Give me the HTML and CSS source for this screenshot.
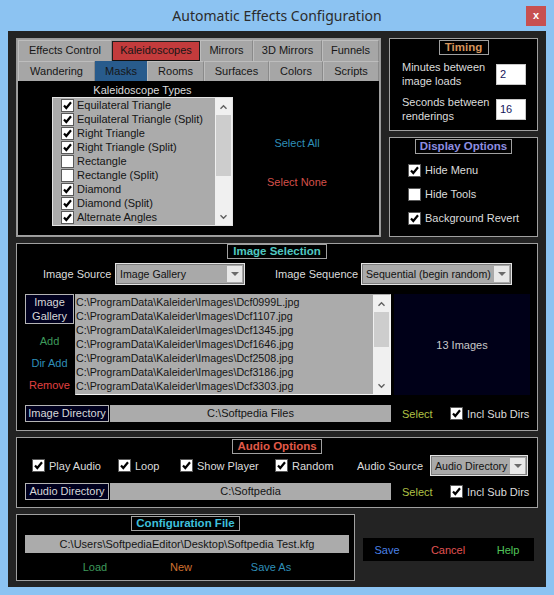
FILE: index.html
```html
<!DOCTYPE html>
<html>
<head>
<meta charset="utf-8">
<title>Automatic Effects Configuration</title>
<link rel="stylesheet" href="styles.css">
</head>
<body>
<div class="titlebar">
  <span class="title">Automatic Effects Configuration</span>
  <span class="close">x</span>
</div>
<div class="client">
  <div class="row-top">
    <div class="tabpanel">
      <div class="tabs">
        <span class="tab w94">Effects Control</span>
        <span class="tab w88 active-red">Kaleidoscopes</span>
        <span class="tab w53">Mirrors</span>
        <span class="tab w69">3D Mirrors</span>
        <span class="tab w57">Funnels</span>
      </div>
      <div class="tabs r2">
        <span class="tab w77">Wandering</span>
        <span class="tab w52 active-blue">Masks</span>
        <span class="tab w57">Rooms</span>
        <span class="tab w65">Surfaces</span>
        <span class="tab w54">Colors</span>
        <span class="tab w56">Scripts</span>
      </div>
      <div class="tabbody">
        <div class="kt">
          <div class="kt-label">Kaleidoscope Types</div>
          <div class="klist">
            <div class="kitems">
              <div class="kitem"><span class="cb"><svg viewBox="0 0 11 11"><path d="M2 5.5 4.3 8 9 2.3"/></svg></span><span>Equilateral Triangle</span></div>
              <div class="kitem"><span class="cb"><svg viewBox="0 0 11 11"><path d="M2 5.5 4.3 8 9 2.3"/></svg></span><span>Equilateral Triangle (Split)</span></div>
              <div class="kitem"><span class="cb"><svg viewBox="0 0 11 11"><path d="M2 5.5 4.3 8 9 2.3"/></svg></span><span>Right Triangle</span></div>
              <div class="kitem"><span class="cb"><svg viewBox="0 0 11 11"><path d="M2 5.5 4.3 8 9 2.3"/></svg></span><span>Right Triangle (Split)</span></div>
              <div class="kitem"><span class="cb"></span><span>Rectangle</span></div>
              <div class="kitem"><span class="cb"></span><span>Rectangle (Split)</span></div>
              <div class="kitem"><span class="cb"><svg viewBox="0 0 11 11"><path d="M2 5.5 4.3 8 9 2.3"/></svg></span><span>Diamond</span></div>
              <div class="kitem"><span class="cb"><svg viewBox="0 0 11 11"><path d="M2 5.5 4.3 8 9 2.3"/></svg></span><span>Diamond (Split)</span></div>
              <div class="kitem"><span class="cb"><svg viewBox="0 0 11 11"><path d="M2 5.5 4.3 8 9 2.3"/></svg></span><span>Alternate Angles</span></div>
            </div>
            <div class="vscroll">
              <span class="sbtn"><svg viewBox="0 0 7 4"><path d="M0.5 3.8 3.5 0.8 6.5 3.8"/></svg></span>
              <span class="thumb k-thumb"></span>
              <span class="track"></span>
              <span class="sbtn"><svg viewBox="0 0 7 4"><path d="M0.5 0.2 3.5 3.2 6.5 0.2"/></svg></span>
            </div>
          </div>
        </div>
        <div class="ksel">
          <span class="c-blue">Select All</span>
          <span class="c-red">Select None</span>
        </div>
      </div>
    </div>
    <div class="side">
      <div class="box timing">
        <div class="btitle t-timing">Timing</div>
        <div class="trow first"><span class="tlabel">Minutes between<br>image loads</span><span class="num">2</span></div>
        <div class="trow"><span class="tlabel">Seconds between<br>renderings</span><span class="num">16</span></div>
      </div>
      <div class="box display">
        <div class="btitle t-display">Display Options</div>
        <div class="drow first"><span class="cb"><svg viewBox="0 0 11 11"><path d="M2 5.5 4.3 8 9 2.3"/></svg></span><span class="lbl">Hide Menu</span></div>
        <div class="drow"><span class="cb"></span><span class="lbl">Hide Tools</span></div>
        <div class="drow"><span class="cb"><svg viewBox="0 0 11 11"><path d="M2 5.5 4.3 8 9 2.3"/></svg></span><span class="lbl">Background Revert</span></div>
      </div>
    </div>
  </div>

  <div class="box imgsel">
    <div class="btitle t-imgsel">Image Selection</div>
    <div class="srcrow">
      <span class="lbl">Image Source</span>
      <div class="dd dd-src"><span class="dd-text">Image Gallery</span><span class="dd-btn"><svg viewBox="0 0 8 4"><path d="M0 0H8L4 4Z"/></svg></span></div>
      <span class="lbl seq-label">Image Sequence</span>
      <div class="dd dd-seq"><span class="dd-text">Sequential (begin random)</span><span class="dd-btn"><svg viewBox="0 0 8 4"><path d="M0 0H8L4 4Z"/></svg></span></div>
    </div>
    <div class="midrow">
      <div class="gcol">
        <div class="navbtn gallery">Image<br>Gallery</div>
        <span class="c-green">Add</span>
        <span class="c-blue">Dir Add</span>
        <span class="c-red2">Remove</span>
      </div>
      <div class="flist">
        <div class="fitems">
          <div>C:\ProgramData\Kaleider\Images\Dcf0999L.jpg</div>
          <div>C:\ProgramData\Kaleider\Images\Dcf1107.jpg</div>
          <div>C:\ProgramData\Kaleider\Images\Dcf1345.jpg</div>
          <div>C:\ProgramData\Kaleider\Images\Dcf1646.jpg</div>
          <div>C:\ProgramData\Kaleider\Images\Dcf2508.jpg</div>
          <div>C:\ProgramData\Kaleider\Images\Dcf3186.jpg</div>
          <div>C:\ProgramData\Kaleider\Images\Dcf3303.jpg</div>
        </div>
        <div class="vscroll">
          <span class="sbtn"><svg viewBox="0 0 7 4"><path d="M0.5 3.8 3.5 0.8 6.5 3.8"/></svg></span>
          <span class="thumb f-thumb"></span>
          <span class="track"></span>
          <span class="sbtn"><svg viewBox="0 0 7 4"><path d="M0.5 0.2 3.5 3.2 6.5 0.2"/></svg></span>
        </div>
      </div>
      <div class="preview">13 Images</div>
    </div>
    <div class="dirrow">
      <div class="navbtn dirbtn">Image Directory</div>
      <div class="path dirpath">C:\Softpedia Files</div>
      <span class="c-yellow sel">Select</span>
      <span class="cb"><svg viewBox="0 0 11 11"><path d="M2 5.5 4.3 8 9 2.3"/></svg></span><span class="lbl sub">Incl Sub Dirs</span>
    </div>
  </div>

  <div class="box audio">
    <div class="btitle t-audio">Audio Options</div>
    <div class="arow">
      <span class="grp g1"><span class="cb"><svg viewBox="0 0 11 11"><path d="M2 5.5 4.3 8 9 2.3"/></svg></span><span class="lbl">Play Audio</span></span>
      <span class="grp g2"><span class="cb"><svg viewBox="0 0 11 11"><path d="M2 5.5 4.3 8 9 2.3"/></svg></span><span class="lbl">Loop</span></span>
      <span class="grp g3"><span class="cb"><svg viewBox="0 0 11 11"><path d="M2 5.5 4.3 8 9 2.3"/></svg></span><span class="lbl">Show Player</span></span>
      <span class="grp g4"><span class="cb"><svg viewBox="0 0 11 11"><path d="M2 5.5 4.3 8 9 2.3"/></svg></span><span class="lbl">Random</span></span>
      <span class="lbl asrc">Audio Source</span>
      <div class="dd dd-audio"><span class="dd-text">Audio Directory</span><span class="dd-btn"><svg viewBox="0 0 8 4"><path d="M0 0H8L4 4Z"/></svg></span></div>
    </div>
    <div class="dirrow audiodir">
      <div class="navbtn dirbtn">Audio Directory</div>
      <div class="path dirpath">C:\Softpedia</div>
      <span class="c-yellow sel">Select</span>
      <span class="cb"><svg viewBox="0 0 11 11"><path d="M2 5.5 4.3 8 9 2.3"/></svg></span><span class="lbl sub">Incl Sub Dirs</span>
    </div>
  </div>

  <div class="row-bottom">
    <div class="box config">
      <div class="btitle t-config">Configuration File</div>
      <div class="path cfgpath">C:\Users\SoftpediaEditor\Desktop\Softpedia Test.kfg</div>
      <div class="cfgrow">
        <span class="c-green cfg1">Load</span>
        <span class="c-orange cfg2">New</span>
        <span class="c-blue cfg3">Save As</span>
      </div>
    </div>
    <div class="actions">
      <span class="act c-save">Save</span>
      <span class="act c-cancel a2">Cancel</span>
      <span class="act c-help a3">Help</span>
    </div>
  </div>
</div>
</body>
</html>
```

FILE: styles.css
```css
* { box-sizing: border-box; }
html, body { margin: 0; padding: 0; }
body {
  width: 554px;
  height: 595px;
  overflow: hidden;
  background: #8cc3f2;
  font-family: "Liberation Sans", Arial, sans-serif;
  font-size: 11px;
  color: #dcdcdc;
}

/* title bar */
.titlebar {
  height: 31px;
  display: grid;
  grid-template-columns: 1fr auto 1fr;
  align-items: start;
}
.title {
  grid-column: 2;
  margin-top: 6px;
  line-height: 20px;
  font-family: "Noto Sans", "Liberation Sans", sans-serif;
  font-size: 14px;
  color: #2b2b2b;
}
.close {
  grid-column: 3;
  justify-self: end;
  margin: 6px 8px 0 0;
  width: 20px;
  height: 20px;
  background: #c75050;
  color: #fff;
  font-weight: bold;
  font-size: 11px;
  line-height: 18px;
  text-align: center;
}

/* client */
.client {
  margin: 0 8px;
  height: 556px;
  background: #232323;
  padding: 7px 8px 0 8px;
  display: flex;
  flex-direction: column;
  gap: 6px;
}
.row-top { display: flex; gap: 8px; height: 199px; }
.row-bottom { display: flex; align-items: flex-start; height: 67px; }

.box {
  background: #000;
  border: 1px solid #a0a0a0;
  display: flex;
  flex-direction: column;
}
.btitle {
  align-self: center;
  margin-top: 0;
  height: 15px;
  border: 1px solid #a0a0a0;
  background: #000;
  font-weight: bold;
  font-size: 11.5px;
  line-height: 13px;
  text-align: center;
}
.t-timing { width: 50px; color: #d6955c; }
.t-display { width: 97px; color: #8e8ee0; }
.t-imgsel { width: 100px; color: #50c8c0; }
.t-audio { width: 90px; color: #e05a48; }
.t-config { width: 109px; color: #3ec0dc; }

/* checkbox */
.cb {
  flex: none;
  width: 13px;
  height: 13px;
  border: 1px solid #5a5a5a;
  background: #fff;
  display: inline-flex;
}
.cb svg { width: 11px; height: 11px; }
.cb path { fill: none; stroke: #000; stroke-width: 2.2; }

/* tab panel */
.tabpanel {
  width: 365px;
  border: 1px solid #9a9a9a;
  background: #a0a0a0;
  padding: 1px;
  display: flex;
  flex-direction: column;
}
.tabs { display: flex; height: 21px; }
.tabs.r2 { height: 20px; }
.tab {
  height: 100%;
  background: #a6a6a6;
  border-left: 1px solid #bdbdbd;
  border-right: 1px solid #8a8a8a;
  border-top: 1px solid #bdbdbd;
  color: #161616;
  text-align: center;
  line-height: 19px;
  white-space: nowrap;
}
.tabs.r2 .tab { line-height: 18px; }
.active-red {
  background: #c33b3c;
  border: 1px solid #1c1c1c;
  border-bottom-color: #111;
  line-height: 17px;
  margin-top: 1px;
  height: 20px;
}
.active-blue { background: #285b8c; border-color: #285b8c; }
.w94 { width: 94px; } .w88 { width: 88px; } .w53 { width: 53px; }
.w69 { width: 69px; } .w57 { width: 57px; } .w77 { width: 77px; }
.w52 { width: 52px; } .w65 { width: 65px; } .w54 { width: 54px; }
.w56 { width: 56px; }

.tabbody { flex: 1; background: #000; display: flex; }
.kt { margin-left: 34px; width: 181px; padding-top: 2px; }
.kt-label { height: 14px; line-height: 14px; text-align: center; }
.klist {
  height: 129px;
  border: 1px solid #e2e2e2;
  background: #ababab;
  display: flex;
}
.kitems { flex: 1; }
.kitem {
  height: 14px;
  display: flex;
  align-items: center;
  padding-left: 8px;
  color: #141414;
  line-height: 14px;
  white-space: nowrap;
}
.kitem .cb { margin-right: 3px; }

.vscroll {
  width: 17px;
  background: #f0f0f0;
  display: flex;
  flex-direction: column;
}
.sbtn {
  height: 17px;
  flex: none;
  display: flex;
  align-items: center;
  justify-content: center;
}
.sbtn svg { width: 7px; height: 4px; overflow: visible; }
.sbtn path { fill: none; stroke: #606060; stroke-width: 1.4; }
.thumb { flex: none; background: #cdcdcd; margin: 0 1px; }
.k-thumb { height: 61px; }
.f-thumb { height: 35px; }
.track { flex: 1; }

.ksel {
  width: 128px;
  padding-top: 55px;
  display: flex;
  flex-direction: column;
  align-items: center;
  gap: 25px;
  line-height: 14px;
}

.c-blue { color: #2f8fb8; }
.c-red { color: #d5504a; }
.c-red2 { color: #e04040; }
.c-green { color: #3e9a5c; }
.c-yellow { color: #b0c044; }
.c-orange { color: #d07030; }

/* side */
.side { width: 149px; display: flex; flex-direction: column; gap: 6px; }
.timing { height: 93px; }
.display { height: 100px; }
.timing .btitle, .display .btitle { margin-top: 1px; }
.trow {
  height: 28px;
  margin-top: 7px;
  padding: 0 11px 0 12px;
  display: flex;
  align-items: center;
  justify-content: space-between;
}
.trow.first { margin-top: 5px; }
.tlabel { line-height: 14px; }
.num {
  width: 30px;
  height: 21px;
  background: #fff;
  border: 1px solid #c8c8c8;
  color: #14145a;
  padding-left: 3px;
  line-height: 19px;
}
.drow {
  height: 24px;
  padding-left: 18px;
  display: flex;
  align-items: center;
}
.drow.first { margin-top: 4px; }
.drow .lbl { margin-left: 4px; }

/* image selection */
.imgsel { height: 188px; }
.srcrow {
  margin-top: 4px;
  height: 22px;
  padding-left: 26px;
  display: flex;
  align-items: center;
}
.lbl { white-space: nowrap; color: #dcdcdc; }
.srcrow .lbl { width: 72px; }
.srcrow .seq-label { width: 86px; margin-left: 30px; }
.dd {
  height: 22px;
  border: 1px solid #e4e4e4;
  box-shadow: inset 0 0 0 1px #7c7c7c;
  background: #a9a9a9;
  padding: 2px;
  display: flex;
  align-items: center;
}
.dd-text {
  flex: 1;
  min-width: 0;
  padding-left: 2px;
  color: #111;
  font-size: 10.6px;
  white-space: nowrap;
  overflow: hidden;
}
.dd-btn {
  flex: none;
  width: 15px;
  height: 16px;
  background: #e8e8e8;
  display: flex;
  align-items: center;
  justify-content: center;
}
.dd-btn svg { width: 8px; height: 4px; }
.dd-btn path { fill: #6a6a6a; }
.dd-src { width: 130px; }
.dd-seq { width: 151px; }

.midrow {
  margin-top: 9px;
  height: 101px;
  padding-left: 8px;
  display: flex;
}
.gcol {
  width: 49px;
  display: flex;
  flex-direction: column;
  align-items: center;
  gap: 8px;
  line-height: 14px;
}
.gcol .gallery { margin-bottom: 2px; }
.navbtn {
  border: 1px solid #b4b4b4;
  background: #00001e;
  color: #d8d8d8;
  text-align: center;
  white-space: nowrap;
}
.gallery { width: 49px; height: 30px; line-height: 14px; padding-top: 0; }
.flist {
  margin-left: 1px;
  width: 316px;
  border: 1px solid #f4f4f4;
  border-top-color: #a9a9a9;
  border-left-color: #a9a9a9;
  background: #ababab;
  display: flex;
}
.fitems { flex: 1; padding-left: 0; font-size: 10.7px; color: #141414; }
.fitems div { height: 14px; line-height: 14px; white-space: nowrap; }
.preview {
  margin-left: 3px;
  width: 136px;
  background: #000018;
  color: #c8c8c8;
  display: flex;
  align-items: center;
  justify-content: center;
}

.dirrow {
  margin-top: 10px;
  height: 17px;
  padding-left: 8px;
  display: flex;
  align-items: center;
}
.dirbtn { width: 84px; height: 17px; line-height: 15px; }
.path {
  background: #ababab;
  color: #141414;
  text-align: center;
  white-space: nowrap;
}
.dirpath { margin-left: 1px; width: 281px; height: 17px; line-height: 17px; }
.sel { margin-left: 11px; width: 48px; }
.sub { margin-left: 4px; }

/* audio */
.audio { height: 71px; }
.audio .btitle { margin-top: 1px; }
.arow {
  margin-top: 1px;
  height: 21px;
  padding-left: 15px;
  display: flex;
  align-items: center;
}
.grp { display: flex; align-items: center; }
.grp .lbl { margin-left: 4px; }
.g1 { width: 86px; }
.g2 { width: 62px; }
.g3 { width: 95px; }
.g4 { width: 82px; }
.asrc { width: 73px; }
.dd-audio { width: 98px; height: 21px; }
.audiodir { margin-top: 7px; }

/* config */
.config { width: 339px; height: 67px; }
.config .btitle { margin-top: 1px; }
.cfgpath { margin: 4px 0 0 8px; width: 324px; height: 18px; line-height: 18px; }
.cfgrow { margin-top: 7px; display: flex; line-height: 14px; }
.cfgrow span { width: 80px; text-align: center; }
.cfg1 { margin-left: 38px; }
.cfg2 { margin-left: 6px; }
.cfg3 { margin-left: 10px; }

.actions {
  margin: 24px 0 0 8px;
  width: 171px;
  height: 23px;
  background: #000;
  display: flex;
  align-items: center;
}
.act { width: 48px; text-align: center; }
.a2 { margin-left: 13px; }
.a3 { margin-left: 12px; }
.c-save { color: #4a80e6; }
.c-cancel { color: #e05252; }
.c-help { color: #52c55a; }
```
